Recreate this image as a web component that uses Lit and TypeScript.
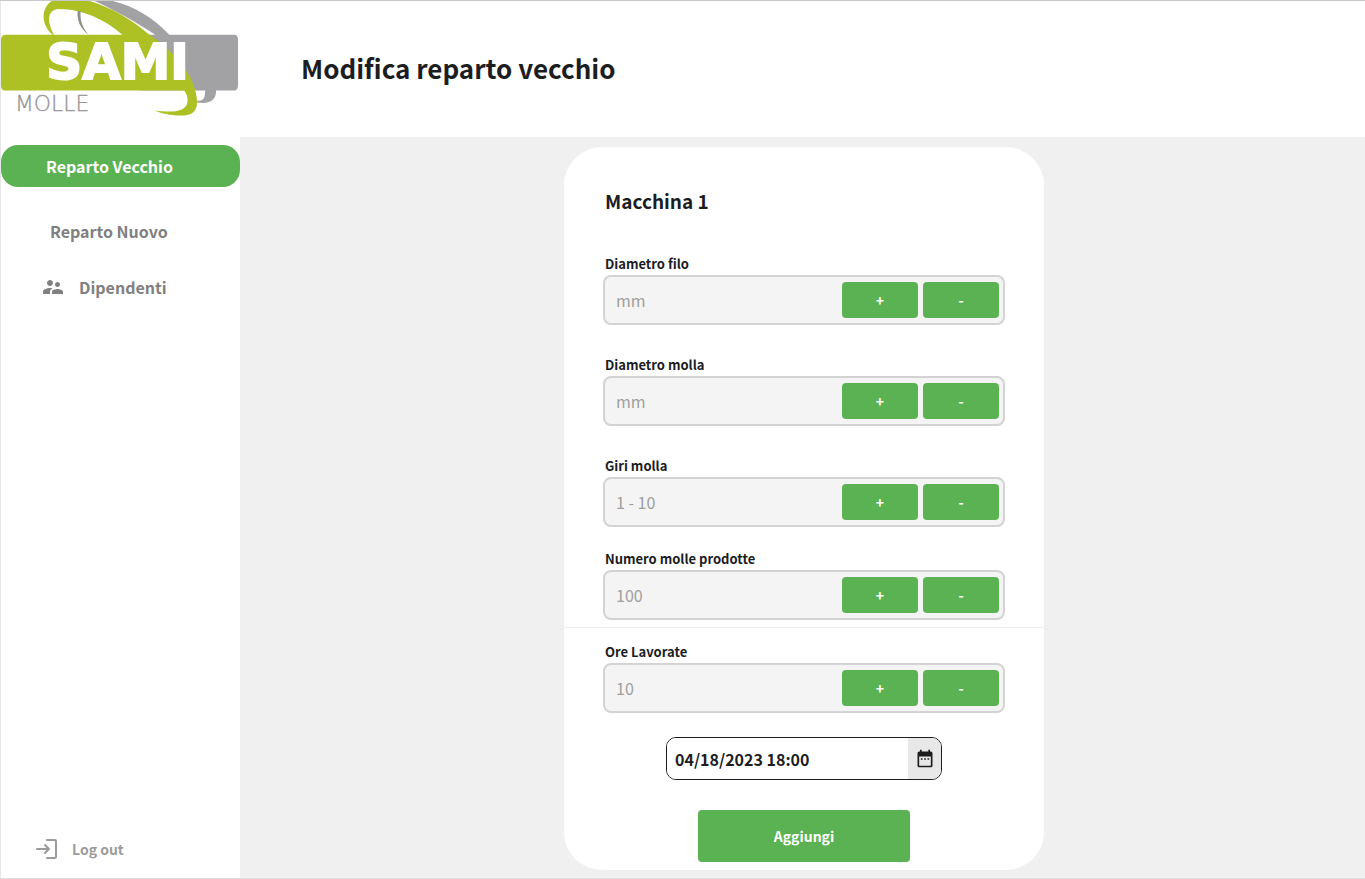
import { LitElement, html, css, svg } from "lit";
import { customElement, property, state } from "lit/decorators.js";
import { classMap } from "lit/directives/class-map.js";

const peopleIcon = svg`<path d="M16.5 12c1.38 0 2.49-1.12 2.49-2.5S17.88 7 16.5 7 14 8.12 14 9.5s1.12 2.5 2.5 2.5zM9 11c1.66 0 2.99-1.34 2.99-3S10.66 5 9 5 6 6.34 6 8s1.34 3 3 3zm7.5 3c-1.83 0-5.5.92-5.5 2.75V19h11v-2.25c0-1.83-3.67-2.75-5.5-2.75zM9 13c-2.33 0-7 1.17-7 3.5V19h7v-2.25c0-.85.33-2.34 2.37-3.47C10.5 13.1 9.66 13 9 13z"/>`;

@customElement("stepper-field")
class StepperField extends LitElement {
  @property() label = "";
  @property() placeholder = "";
  @state() private value = "";

  static styles = css`
    :host { display: block; }
    .label {
      display: block;
      height: 22px;
      padding-left: 2px;
      font-size: 13px;
      line-height: 21px;
      font-weight: 700;
      color: #1c1d1f;
    }
    .box {
      display: flex;
      align-items: center;
      gap: 5px;
      box-sizing: border-box;
      height: 50px;
      padding: 0 4px 0 11px;
      border: 2px solid #d3d3d3;
      border-radius: 8px;
      background: #f4f4f4;
    }
    .input {
      flex: 1;
      min-width: 0;
      padding: 0;
      border: 0;
      outline: 0;
      background: transparent;
      font: inherit;
      font-size: 16px;
      line-height: 24px;
      color: #1c1d1f;
    }
    .input::placeholder { color: #9f9f9f; opacity: 1; }
    .step {
      width: 76px;
      height: 36px;
      padding: 0;
      border: 0;
      border-radius: 4px;
      background: #5bb253;
      color: #fff;
      font: inherit;
      font-size: 14px;
      line-height: 20px;
      font-weight: 700;
      cursor: pointer;
    }
  `;

  private step(delta: number) {
    this.value = String(Math.max(0, (Number(this.value) || 0) + delta));
  }

  render() {
    return html`
      <label class="label" for="value">${this.label}</label>
      <div class="box">
        <input
          class="input"
          id="value"
          type="text"
          inputmode="numeric"
          placeholder=${this.placeholder}
          .value=${this.value}
          @input=${(e: Event) => (this.value = (e.target as HTMLInputElement).value)}
        />
        <button class="step" type="button" @click=${() => this.step(1)}>+</button>
        <button class="step" type="button" @click=${() => this.step(-1)}>-</button>
      </div>
    `;
  }
}

@customElement("sami-logo")
class SamiLogo extends LitElement {
  static styles = css`
    :host { display: block; }
    .art { display: block; width: 100%; }
    .name { font: 700 50px "DejaVu Sans", sans-serif; fill: #fff; stroke: #fff; stroke-width: 2; }
    .sub { font: 200 22px "DejaVu Sans", sans-serif; fill: #969496; stroke: #969496; stroke-width: 0.3; }
  `;

  render() {
    return html`
      <svg class="art" viewBox="0 0 240 117" role="img" aria-label="Sami Molle">
        <path d="M94 0H112C134 5 153 17 169 34H234Q238 34 238 39V85Q238 90 233 90H216C216 99 211 104 197 102V100C203 101 205 98 205 90H140V34H155C135 21 116 10 94 0Z" fill="#a2a2a5" />
        <path d="M51 0H89C112 7 132 19 149 34C170 48 190 69 195 90C200 108 195 116 180 115C170 115 161 113 154 110C171 112 184 112 187 103C188 98 187 94 184 90H5Q0 90 0 85V39Q0 34 5 34H52C41 25 39 8 51 0Z" fill="#adc024" />
        <path d="M53 34C46 20 46 9 58 8C82 8 105 19 122 34Z" fill="#fff" />
        <path d="M77 10C76 20 80 28 88 34C82 27 79 19 80 10Z" fill="#8f9187" />
        <text class="name" x="117" y="78" text-anchor="middle">SAMI</text>
        <text class="sub" x="14" y="110">MOLLE</text>
      </svg>
    `;
  }
}

@customElement("app-root")
class AppRoot extends LitElement {
  @state() private active = "vecchio";
  @state() private date = "04/18/2023 18:00";

  static styles = css`
    :host {
      display: grid;
      grid-template-columns: 240px minmax(0, 1fr);
      grid-template-rows: auto 1fr;
      grid-template-areas: "side head" "side main";
      box-sizing: border-box;
      min-height: 100vh;
      border-top: 1px solid #c9c9c9;
      border-bottom: 1px solid #dedede;
      background: #fff;
      color: #1c1d1f;
      font-family: "Noto Sans CJK SC", sans-serif;
    }
    .side {
      grid-area: side;
      display: flex;
      flex-direction: column;
      box-sizing: border-box;
      border-left: 1px solid #e6e6e6;
    }
    .nav { display: flex; flex-direction: column; gap: 14px; margin-top: 27px; }
    .link {
      display: flex;
      align-items: center;
      gap: 14px;
      height: 42px;
      padding-left: 49px;
      border-radius: 17px;
      color: #808080;
      font-size: 16px;
      line-height: 24px;
      font-weight: 700;
      text-decoration: none;
    }
    .link.active { background: #5bb253; color: #fff; padding-left: 45px; margin-bottom: 9px; }
    .link.with-icon { padding-left: 40px; }
    .icon { width: 24px; height: 24px; flex: none; fill: currentColor; }
    .logout {
      display: flex;
      align-items: center;
      gap: 14px;
      margin: auto 0 17px 33px;
      padding: 0;
      border: 0;
      background: none;
      color: #9b9b9b;
      font: inherit;
      font-size: 14px;
      line-height: 24px;
      font-weight: 700;
      cursor: pointer;
    }
    .outline { fill: none; stroke: currentColor; stroke-width: 2; stroke-linecap: round; stroke-linejoin: round; }
    .head { grid-area: head; padding: 47px 61px 49px; }
    .title { margin: 0; font-size: 26px; line-height: 40px; font-weight: 700; }
    .main { grid-area: main; padding: 10px 0 8px 3px; background: #f0f0f0; }
    .card {
      box-sizing: border-box;
      width: 480px;
      max-width: 100%;
      margin: 0 auto;
      padding: 38px 0 8px;
      border-radius: 38px;
      background: #fff;
    }
    .machine { margin: 0 0 36px 2px; font-size: 19px; line-height: 32px; font-weight: 700; }
    .group { padding: 0 39px; }
    .fields { display: flex; flex-direction: column; gap: 29px; }
    .last { margin-top: 21px; }
    .rule { height: 1px; margin: 7px 0 13px; border: 0; background: #f0f0f0; }
    .date {
      display: flex;
      box-sizing: border-box;
      width: 276px;
      height: 43px;
      margin: 24px auto 0;
      border: 1px solid #1c1d1f;
      border-radius: 10px;
      overflow: hidden;
    }
    .date-input {
      flex: 1;
      min-width: 0;
      padding: 0 8px;
      border: 0;
      outline: 0;
      background: #fff;
      color: inherit;
      font: inherit;
      font-size: 16px;
      line-height: 24px;
      font-weight: 700;
    }
    .date-button {
      display: grid;
      place-items: center;
      width: 33px;
      padding: 0;
      border: 0;
      background: #e8e8e8;
      color: #1c1d1f;
      cursor: pointer;
    }
    .calendar { width: 20px; height: 20px; fill: currentColor; }
    .submit {
      display: block;
      width: 212px;
      height: 52px;
      margin: 30px auto 0;
      padding: 0;
      border: 0;
      border-radius: 4px;
      background: #5bb253;
      color: #fff;
      font: inherit;
      font-size: 14px;
      line-height: 24px;
      font-weight: 700;
      cursor: pointer;
    }
  `;

  private link(id: string, text: string, icon: unknown = null) {
    return html`<a
      href="#${id}"
      class=${classMap({ link: true, active: this.active === id, "with-icon": !!icon })}
      @click=${() => (this.active = id)}
      >${icon ? html`<svg class="icon" viewBox="0 0 24 24" aria-hidden="true">${icon}</svg>` : null}${text}</a
    >`;
  }

  render() {
    return html`
      <aside class="side">
        <sami-logo></sami-logo>
        <nav class="nav">
          ${this.link("vecchio", "Reparto Vecchio")}
          ${this.link("nuovo", "Reparto Nuovo")}
          ${this.link("dipendenti", "Dipendenti", peopleIcon)}
        </nav>
        <button class="logout" type="button">
          <svg class="icon outline" viewBox="0 0 24 24" aria-hidden="true">
            <path d="M3 12H15M11 8L15 12L11 16M13 3H21Q22 3 22 4V20Q22 21 21 21H13" />
          </svg>
          Log out
        </button>
      </aside>
      <header class="head"><h1 class="title">Modifica reparto vecchio</h1></header>
      <main class="main">
        <form class="card" @submit=${(e: Event) => e.preventDefault()}>
          <div class="group">
            <h2 class="machine">Macchina 1</h2>
            <div class="fields">
              <stepper-field label="Diametro filo" placeholder="mm"></stepper-field>
              <stepper-field label="Diametro molla" placeholder="mm"></stepper-field>
              <stepper-field label="Giri molla" placeholder="1 - 10"></stepper-field>
            </div>
            <stepper-field class="last" label="Numero molle prodotte" placeholder="100"></stepper-field>
          </div>
          <hr class="rule" />
          <div class="group">
            <stepper-field label="Ore Lavorate" placeholder="10"></stepper-field>
            <div class="date">
              <input
                class="date-input"
                type="text"
                aria-label="Data e ora"
                .value=${this.date}
                @input=${(e: Event) => (this.date = (e.target as HTMLInputElement).value)}
              />
              <button class="date-button" type="button" aria-label="Apri calendario">
                <svg class="calendar" viewBox="0 0 24 24" aria-hidden="true">
                  <path fill-rule="evenodd" d="M5 3H6V1H8V3H16V1H18V3H19Q21 3 21 5V20Q21 22 19 22H5Q3 22 3 20V5Q3 3 5 3ZM5 9V20H19V9ZM7 11H9V13H7ZM11 11H13V13H11ZM15 11H17V13H15Z" />
                </svg>
              </button>
            </div>
            <button class="submit" type="submit">Aggiungi</button>
          </div>
        </form>
      </main>
    `;
  }
}
